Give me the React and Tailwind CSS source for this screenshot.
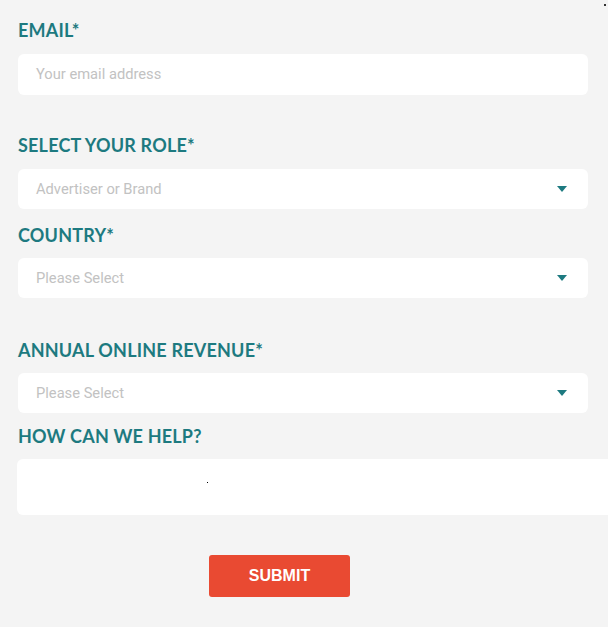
export default function App() {
  const labelCls =
    "block h-[20px] leading-[20px] text-[18px] font-bold text-[#1d7a80] uppercase tracking-[0.2px] [font-family:Lato,'Open_Sans',sans-serif]";
  const fieldCls =
    "flex items-center w-[570px] bg-white rounded-[6px] pl-[18px] pr-[21px] text-[14.7px] text-[#c2c2c2] [font-family:Roboto,'Liberation_Sans',sans-serif]";
  const Caret = () => (
    <svg width="10" height="6" viewBox="0 0 10 6" className="ml-auto">
      <path d="M0 0 H10 L5 6 Z" fill="#1d7a80" />
    </svg>
  );
  return (
    <div className="relative w-[608px] h-[627px] bg-[#f4f4f4] overflow-hidden pl-[18px] pt-[20px]">
      <div className="absolute top-[4px] right-[2px] w-[2px] h-[2px] bg-[#333]" />
      <label className={labelCls}>Email*</label>
      <div className={fieldCls + " h-[41px] mt-[14px]"}>Your email address</div>

      <label className={labelCls + " mt-[40px]"}>Select your role*</label>
      <div className={fieldCls + " h-[40px] mt-[14px]"}>
        <span>Advertiser or Brand</span>
        <Caret />
      </div>

      <label className={labelCls + " mt-[16px]"}>Country*</label>
      <div className={fieldCls + " h-[40px] mt-[13px]"}>
        <span>Please Select</span>
        <Caret />
      </div>

      <label className={labelCls + " mt-[42px]"}>Annual online revenue*</label>
      <div className={fieldCls + " h-[40px] mt-[13px]"}>
        <span>Please Select</span>
        <Caret />
      </div>

      <label className={labelCls + " mt-[13px]"}>How can we help?</label>
      <div className="relative w-[600px] h-[56px] mt-[13px] -ml-[1px] bg-white rounded-l-[6px]">
        <div className="absolute left-[190px] top-[23px] w-[1px] h-[1px] bg-black" />
      </div>

      <div className="mt-[40px] pl-[191px]">
        <button className="w-[141px] h-[42px] bg-[#e94a32] rounded-[3px] text-white text-[16px] font-bold [font-family:'Liberation_Sans',Arial,sans-serif]">
          SUBMIT
        </button>
      </div>
    </div>
  );
}
